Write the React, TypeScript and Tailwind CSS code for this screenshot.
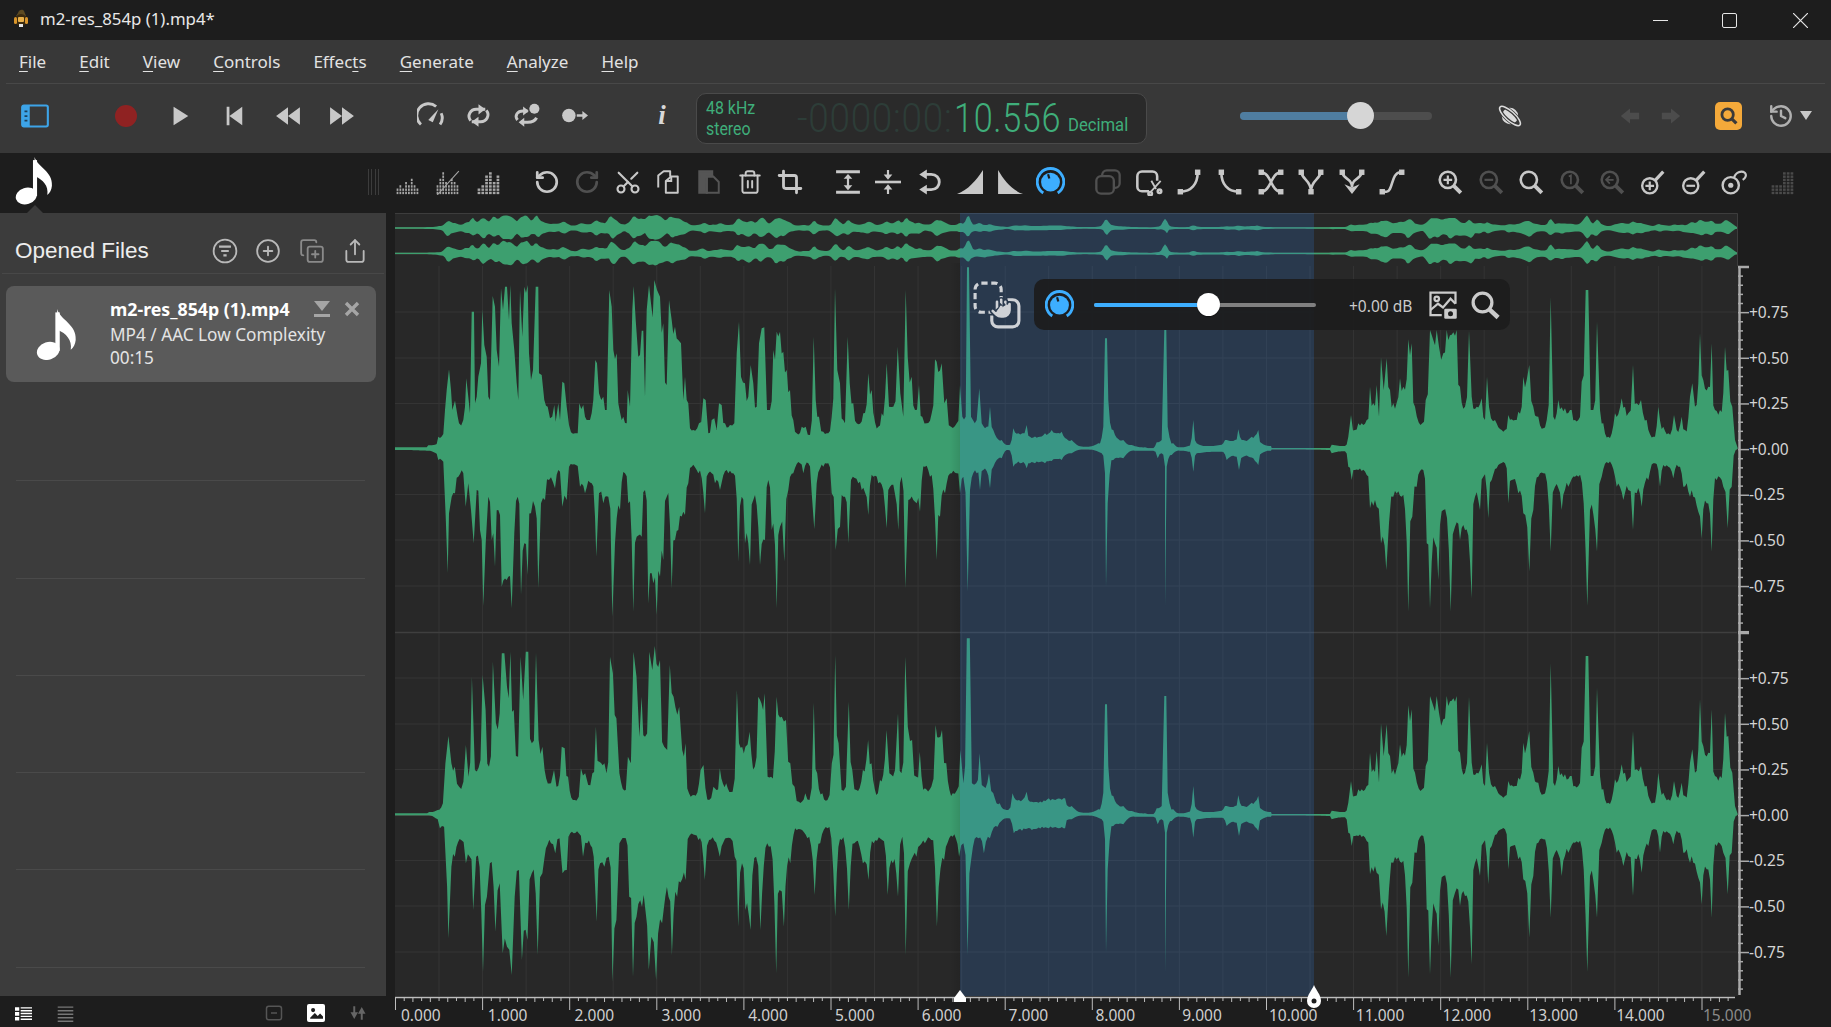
import type { ReactNode } from "react";
import { CirclePlus, CopyPlus, Crop, Hand, History, RotateCcw, RotateCw, Scissors, Share, Trash2 } from "lucide-react";

type Pt = [number, number];

// traced wave envelopes, written in the coordinates they were read at
const parse = (s: string, x0: number, y0: number, kx: number, ky: number): Pt[] =>
  s.split(";").map((p) => {
    const [x, y] = p.split(",").map(Number);
    return [x0 + x / kx, y0 + y / ky];
  });

const A_TOP =
  "0,712;95,712;100,706;120,704;130,680;145,672;150,600;155,540;162,478;168,540;172,600;180,572;188,620;192,640;205,630;210,590;214,505;220,560;225,610;230,305;237,305;240,580;245,560;250,500;258,460;262,298;268,405;275,440;280,560;285,570;293,258;300,290;305,420;312,470;318,235;324,300;330,230;336,230;342,330;346,225;350,340;358,420;365,520;370,570;375,240;382,380;388,230;398,225;402,430;408,510;414,480;422,230;430,230;432,490;440,495;448,570;458,590;465,625;478,585;482,635;490,580;495,630;502,515;508,520;515,590;522,645;540,670;548,670;553,580;565,585;570,620;580,630;595,570;601,450;606,460;612,550;625,560;635,600;643,240;650,290;655,420;665,430;670,580;685,620;695,640;698,540;705,590;712,300;716,228;722,330;730,440;740,362;745,362;750,560;755,300;762,225;768,280;778,210;786,240;795,260;805,340;815,525;822,270;830,330;840,350;850,390;858,400;865,570;870,500;880,580;885,655;895,660;912,640;925,565;932,570;940,670;950,630;958,625;965,660;972,580;980,585;990,640;1005,645;1018,640;1025,430;1032,335;1038,500;1050,520;1060,560;1067,465;1075,520;1085,590;1092,400;1100,355;1108,352;1116,600;1125,600;1135,420;1145,365;1155,365;1165,425;1175,480;1185,540;1195,630;1205,670;1220,650;1232,650;1245,675;1256,380;1262,570;1272,620;1285,665;1300,670;1310,620;1320,235;1327,480;1335,520;1345,630";
const A_BOT =
  "0,720;95,722;120,728;130,750;145,755;152,920;158,1090;162,910;170,860;180,850;190,800;205,790;212,890;220,820;228,900;236,1000;245,840;255,960;265,1188;272,1000;280,860;290,990;300,1070;310,900;320,1130;335,1110;350,1195;358,970;368,860;378,1155;388,1000;398,1095;408,910;420,890;430,1135;438,880;450,870;462,810;480,835;495,785;502,890;515,870;522,770;548,768;555,830;570,850;590,820;600,920;604,1040;612,850;625,880;640,860;652,1220;660,1000;675,900;690,790;700,880;715,1205;725,980;740,980;750,840;760,1180;765,1090;775,1120;785,1215;795,1100;805,1050;815,860;830,1135;840,990;850,960;870,915;880,820;890,770;910,790;930,910;940,790;960,820;975,840;1000,790;1015,790;1030,1055;1040,860;1050,1000;1065,1065;1075,870;1095,1065;1110,990;1120,810;1130,960;1145,1195;1155,950;1168,1055;1180,840;1195,790;1215,760;1225,790;1240,760;1250,850;1258,958;1265,820;1285,770;1300,760;1310,850;1322,1020;1335,950;1345,860";
const B_TOP =
  "0,640;8,380;14,520;25,580;35,640;55,610;70,490;80,540;100,650;110,610;125,460;132,590;145,590;158,410;166,550;175,620;182,240;188,440;200,500;210,600;222,525;232,620;245,640;260,610;270,448;290,460;298,580;305,565;318,650;335,640;345,525;352,620;362,620;366,172;372,172;378,620;395,630;403,535;410,640;425,650;435,590;445,660;470,690;490,705;505,655;520,670;532,670;545,645;555,680;600,670;620,660;650,665;680,690;720,710;760,700;775,650;780,385;786,385;790,570;805,660;835,690;860,705;900,712;920,715;935,697;950,690;958,360;964,360;968,650;985,700;1005,712;1030,708;1045,630;1055,700;1085,708;1125,705;1140,690;1170,690;1180,658;1195,690;1220,680;1240,660;1250,700;1278,708;1280,714;1350,714";
const B_BOT =
  "0,860;10,1000;18,810;40,820;50,840;70,915;85,800;100,820;125,955;135,830;160,960;170,800;181,1135;190,870;215,880;225,905;240,770;255,800;275,1050;285,920;300,850;320,790;335,790;345,850;355,800;368,1145;375,840;395,790;405,840;415,780;435,835;445,770;470,745;490,720;505,770;525,760;545,775;555,760;600,760;650,750;680,730;720,718;770,730;780,790;783,1130;788,880;805,750;835,745;870,722;925,722;938,745;950,730;960,770;960,1190;965,770;980,735;1005,722;1030,725;1045,785;1055,730;1130,725;1145,750;1175,740;1182,780;1195,740;1240,765;1250,730;1278,722;1280,718;1350,718";
const C_TOP =
  "0,714;105,714;110,704;150,708;160,680;168,615;180,660;190,640;215,630;225,530;235,580;245,525;252,620;258,442;266,540;275,445;285,540;295,580;315,505;325,530;340,388;350,400;360,590;382,640;392,570;405,360;425,360;432,410;445,430;455,360;485,360;495,530;510,590;522,362;530,560;545,590;560,565;570,630;576,500;582,590;600,630;630,660;640,615;660,630;670,605;680,590;685,500;695,510;703,465;715,590;730,620;745,655;755,630;767,262;775,620;790,570;810,595;830,600;840,630;850,630;860,515;872,240;880,240;887,600;895,600;906,335;915,600;925,640;940,680;960,610;980,565;990,590;1000,610;1014,465;1025,580;1038,570;1055,630;1075,680;1090,590;1105,650;1120,670;1137,615;1145,660;1160,620;1170,660;1185,560;1192,520;1200,590;1215,370;1225,510;1240,530;1250,400;1260,600;1275,600;1290,410;1300,480;1312,590;1320,690;1328,714";
const C_BOT =
  "0,718;105,720;110,730;150,724;160,770;170,810;180,780;215,795;225,895;245,890;258,1000;274,1080;282,940;295,860;320,860;340,1205;352,920;365,830;385,780;395,1000;405,1195;420,1000;430,1110;445,900;467,1205;480,950;495,990;510,960;530,1165;540,860;555,900;565,800;580,925;590,810;630,760;640,880;650,810;670,850;685,910;703,1085;715,900;730,800;745,790;767,1025;780,830;800,900;820,830;850,800;877,1188;885,900;906,1025;920,800;940,760;965,830;985,870;1000,840;1014,960;1025,850;1040,890;1060,810;1080,760;1095,830;1110,770;1135,805;1150,770;1165,830;1185,860;1220,985;1235,880;1250,1025;1265,810;1285,830;1298,955;1310,830;1322,720;1328,716";
const D_TOP =
  "0,550;75,550;80,546;100,540;112,520;118,400;125,318;132,400;140,410;150,470;160,455;166,345;172,440;180,140;187,420;200,390;205,135;212,240;220,410;229,95;236,280;245,250;250,70;256,70;262,170;270,65;278,240;288,380;294,80;300,210;306,65;312,65;320,340;330,68;336,330;345,350;350,420;365,460;372,420;378,470;390,350;397,355;405,440;420,510;430,500;435,415;445,430;452,465;462,430;470,290;478,395;490,400;495,430;503,80;510,130;518,265;525,430;540,480;545,380;552,400;558,65;565,140;572,320;577,200;585,320;595,65;602,120;608,48;620,90;630,350;637,360;643,105;652,200;665,230;672,360;680,340;688,490;700,495;715,420;722,405;735,510;745,470;752,480;760,415;775,460;790,485;800,180;805,340;820,350;830,305;842,410;850,200;865,190;872,440;880,440;893,200;905,260;915,270;925,400;935,470;945,515;960,490;970,510;980,218;988,430;1000,490;1012,510;1022,400;1030,75;1038,340;1045,480;1055,470;1062,215;1070,420;1080,480;1095,420;1107,330;1115,400;1130,490;1135,450;1150,300;1157,430;1170,420;1177,250;1185,430;1194,80;1200,290;1210,330;1220,440;1228,365;1240,475;1255,470;1265,285;1280,300;1290,400;1305,490;1315,480;1323,360;1330,460;1338,25;1345,25;1350,460;1360,460;1368,370;1378,470;1390,430;1400,490;1415,520;1435,540;1445,490;1460,510;1478,485;1490,515;1530,505;1568,505";
const D_BOT =
  "0,556;75,556;95,565;105,595;115,590;122,770;125,925;132,710;140,680;155,630;166,700;175,680;183,840;190,680;206,1025;215,800;222,700;235,905;245,760;252,970;262,950;273,1035;280,800;290,720;297,990;310,930;320,730;334,975;345,730;365,640;375,670;385,625;392,730;402,720;410,610;430,610;440,680;450,640;465,680;472,875;480,700;490,710;500,680;509,1055;518,870;525,640;540,625;548,800;557,1040;565,860;578,830;594,1020;600,920;611,1050;625,880;640,800;648,975;660,800;680,750;690,615;710,630;725,750;735,630;760,680;785,625;795,680;803,890;812,700;820,840;832,900;845,680;855,900;875,650;892,1030;900,780;910,890;925,700;940,600;965,625;982,795;995,640;1012,595;1030,860;1045,630;1062,840;1075,640;1095,700;1108,750;1120,640;1140,630;1153,795;1165,700;1177,800;1187,620;1195,975;1205,700;1220,680;1240,640;1255,630;1268,890;1285,690;1305,620;1320,680;1330,640;1340,975;1348,690;1365,625;1378,670;1392,625;1410,590;1435,565;1448,610;1490,600;1530,595;1568,595";

const join = (a: string, b: string, c: string) => [
  ...parse(a, 395, 210, 3, 3),
  ...parse(b, 845, 210, 3, 3),
  ...parse(c, 1295, 210, 3, 3),
];

const CY1 = 448.7;
const CY2 = 814.7;

// stable pseudo noise so the picture is the same on every load
const noise = (x: number) => {
  const v = Math.sin(x * 12.9898) * 43758.5453;
  return v - Math.floor(v);
};

// bends the straight traced segments inward and roughens them a little
function detail(pts: Pt[], cy: number): Pt[] {
  const out: Pt[] = [];
  for (let i = 0; i < pts.length - 1; i++) {
    const [x0, y0] = pts[i];
    const [x1, y1] = pts[i + 1];
    out.push([x0, y0]);
    const dir = y0 < cy ? -1 : 1;
    const a0 = Math.abs(y0 - cy);
    const a1 = Math.abs(y1 - cy);
    const steps = Math.floor((x1 - x0) / 1.6);
    for (let s = 1; s < steps; s++) {
      const t = s / steps;
      const x = x0 + (x1 - x0) * t;
      const base = a0 + (a1 - a0) * t;
      const sag = 0.35 * Math.sin(Math.PI * t) * Math.abs(a1 - a0);
      const rough = base > 8 ? 1 - 0.13 * noise(x + cy) : 1;
      out.push([x, cy + dir * Math.max(0.5, (base - sag) * rough)]);
    }
  }
  out.push(pts[pts.length - 1]);
  return out;
}

const top1 = detail(join(A_TOP, B_TOP, C_TOP), CY1);
const bot1 = detail(join(A_BOT, B_BOT, C_BOT), CY1);

const secondHalf = (pts: Pt[]): Pt[] =>
  pts.filter(([x]) => x > 1065).map(([x, y]) => [x, y + (CY2 - CY1)]);

const top2 = [...detail(parse(D_TOP, 395, 630, 2.34, 3), CY2), ...secondHalf(top1)];
const bot2 = [...detail(parse(D_BOT, 395, 630, 2.34, 3), CY2), ...secondHalf(bot1)];

const toPath = (top: Pt[], bot: Pt[]) =>
  "M" +
  [...top, ...[...bot].reverse()].map(([x, y]) => `${x.toFixed(1)} ${y.toFixed(1)}`).join("L") +
  "Z";

function sample(pts: Pt[], x: number) {
  for (let i = 1; i < pts.length; i++) {
    if (pts[i][0] >= x) {
      const [x0, y0] = pts[i - 1];
      const [x1, y1] = pts[i];
      const t = x1 === x0 ? 0 : (x - x0) / (x1 - x0);
      return y0 + (y1 - y0) * t;
    }
  }
  return pts[pts.length - 1][1];
}

// the overview strip is a squashed copy of the big wave
function overview(pts: Pt[], cy: number, lane: number, dir: number): Pt[] {
  const out: Pt[] = [];
  for (let x = 395; x <= 1737; x += 2) {
    const sum = Math.abs(sample(pts, x - 1.5) - cy) + Math.abs(sample(pts, x) - cy) + Math.abs(sample(pts, x + 1.5) - cy);
    const a = sum / 3 / 170;
    out.push([x, lane + dir * (0.5 + 13 * Math.pow(a, 0.8))]);
  }
  return out;
}

const WAVE1 = toPath(top1, bot1);
const WAVE2 = toPath(top2, bot2);
const OV1 = toPath(overview(top1, CY1, 228, -1), overview(bot1, CY1, 228, 1));
const OV2 = toPath(overview(top2, CY2, 253.5, -1), overview(bot2, CY2, 253.5, 1));

function Svg({
  children,
  size = 26,
  className = "",
  box = "0 0 24 24",
  strokeWidth,
}: {
  children: ReactNode;
  size?: number;
  className?: string;
  box?: string;
  strokeWidth?: number;
}) {
  return (
    <svg width={size} height={size} viewBox={box} fill="none" stroke="currentColor" strokeWidth={strokeWidth} className={className}>
      {children}
    </svg>
  );
}

function Note({ size = 40, className = "" }: { size?: number; className?: string }) {
  return (
    <svg width={size} height={size * 1.2} viewBox="0 0 40 48" className={className} fill="currentColor">
      <ellipse cx="12" cy="39" rx="10.5" ry="8" transform="rotate(-18 12 39)" />
      <rect x="18.5" y="4" width="4" height="35" />
      <path d="M20 1C23 11 38 15 37 29C36.600 33 35 36 32.500 38C34 29 28 23 21 20Z" />
    </svg>
  );
}

function Lens({ children, dim }: { children?: ReactNode; dim?: boolean }) {
  return (
    <Svg className={dim ? "text-[#505050]" : "text-[#c8c8c8]"}>
      <circle cx="10" cy="10" r="7.500" strokeWidth="2.400" />
      <path d="M15.500 15.500L22 22" strokeWidth="3.600" />
      {children}
    </Svg>
  );
}

function KeyIcon({ children }: { children?: ReactNode }) {
  return (
    <Svg className="text-[#c8c8c8]">
      <circle cx="9" cy="15.500" r="7" strokeWidth="2.200" />
      <path d="M14 10.500L21.500 2.500" strokeWidth="3" />
      {children}
    </Svg>
  );
}

function Knob({ size = 28 }: { size?: number }) {
  return (
    <Svg size={size} className="text-[#3daeff]">
      <path d="M6 21.500A11 11 0 1 1 18 21.500" strokeWidth="2.400" />
      <circle cx="12" cy="12.500" r="7.800" fill="currentColor" stroke="none" />
      <path d="M10 6L11 9.500" stroke="#1d1d1d" strokeWidth="1.800" />
    </Svg>
  );
}

function Bars({ cols, dim, slash }: { cols: number[]; dim?: boolean; slash?: boolean }) {
  return (
    <Svg className={dim ? "text-[#4a4a4a]" : "text-[#a6a6a6]"}>
      {cols.map((n, c) =>
        Array.from({ length: n }, (_, r) => (
          <rect
            key={`${c}-${r}`}
            x={1.500 + c * (21 / cols.length)}
            y={21 - r * 3}
            width={21 / cols.length - 1}
            height="2.200"
            fill="currentColor"
            stroke="none"
          />
        )),
      )}
      {slash && <path d="M2 24L22 2" strokeWidth="1" />}
    </Svg>
  );
}

const Cap = ({ x, y }: { x: number; y: number }) => (
  <rect x={x - 2.500} y={y - 2.500} width="5" height="5" fill="currentColor" stroke="none" />
);

function Curve({ d, caps }: { d: string; caps: Pt[] }) {
  return (
    <Svg className="text-[#c8c8c8]">
      <path d={d} strokeWidth="2.400" />
      {caps.map(([x, y], i) => (
        <Cap key={i} x={x} y={y} />
      ))}
    </Svg>
  );
}

function Slot({ w = "w-[40.6px]", children }: { w?: string; children?: ReactNode }) {
  return <div className={`flex shrink-0 items-center justify-center ${w}`}>{children}</div>;
}

const MENUS: [string, string, string][] = [
  ["", "F", "ile"],
  ["", "E", "dit"],
  ["", "V", "iew"],
  ["", "C", "ontrols"],
  ["Effec", "t", "s"],
  ["", "G", "enerate"],
  ["", "A", "nalyze"],
  ["", "H", "elp"],
];

function TitleBar() {
  return (
    <div className="flex h-10 shrink-0 items-center bg-[#1d1d1d] pl-[13px]">
      <svg width="16" height="22" viewBox="0 0 16 22" className="mt-[-2px]">
        <path d="M5 5C6 1 10 1 11 3L13 8H3Z" fill="#5d4a22" />
        <circle cx="8" cy="12" r="6" fill="#3a2a10" />
        <rect x="1" y="9" width="3" height="7" rx="1.500" fill="#d9952b" />
        <rect x="12" y="9" width="3" height="7" rx="1.500" fill="#d9952b" />
        <rect x="5" y="9" width="6" height="5" rx="1" fill="#e8b04a" />
        <rect x="6" y="16" width="4" height="3" fill="#e6e6e6" />
      </svg>
      <span className="ml-[11px] mt-[-2px] text-[16.800px] leading-none text-[#e8e8e8]">m2-res_854p (1).mp4*</span>
      <div className="ml-auto flex items-center text-[#e6e6e6]">
        <span className="h-px w-[15px] bg-current" />
        <span className="ml-[54px] h-[15px] w-[15px] rounded-[2px] border-[1.5px] border-current" />
        <svg className="ml-[56px] mr-[23px]" width="15" height="15" viewBox="0 0 15 15" stroke="currentColor" strokeWidth="1.200">
          <path d="M0 0L15 15M15 0L0 15" />
        </svg>
      </div>
    </div>
  );
}

function MenuBar() {
  return (
    <div className="flex h-[44px] shrink-0 bg-[#383838] px-[6px]">
      <div className="flex w-full items-center gap-[33.100px] border-b border-[#484848] pl-[13px] text-[17px] leading-none text-[#e2e2e2]">
        {MENUS.map(([pre, key, rest]) => (
          <span key={pre + key + rest}>
            {pre}
            <span className="underline underline-offset-[3px]">{key}</span>
            {rest}
          </span>
        ))}
      </div>
    </div>
  );
}

function Transport() {
  return (
    <div className="flex h-[69px] shrink-0 items-center bg-[#383838] pb-[6px] text-[#c8c8c8]">
      <Svg size={28} className="ml-[21px] text-[#3da4e8]">
        <rect x="1" y="3" width="22" height="18" rx="1.500" strokeWidth="1.800" />
        <rect x="1" y="3" width="6.500" height="18" fill="currentColor" stroke="none" />
        <path d="M3 8H5.500M3 12H5.500M3 16H5.500" stroke="#1d3f5a" strokeWidth="1.500" />
      </Svg>
      <div className="ml-[50px] flex">
        <Slot w="w-[54px]">
          <span className="h-[22px] w-[22px] rounded-full bg-[#8f2222]" />
        </Slot>
        <Slot w="w-[54px]">
          <Svg size={22} className="text-[#c8c8c8]">
            <path d="M5 2L21 12L5 22Z" fill="currentColor" stroke="none" />
          </Svg>
        </Slot>
        <Slot w="w-[54px]">
          <Svg size={22}>
            <path d="M4 2H7V22H4ZM21 2V22L7 12Z" fill="currentColor" stroke="none" />
          </Svg>
        </Slot>
        <Slot w="w-[54px]">
          <Svg size={26}>
            <path d="M12 4V20L1 12ZM23 4V20L12 12Z" fill="currentColor" stroke="none" />
          </Svg>
        </Slot>
        <Slot w="w-[54px]">
          <Svg size={26}>
            <path d="M1 4V20L12 12ZM12 4V20L23 12Z" fill="currentColor" stroke="none" />
          </Svg>
        </Slot>
      </div>
      <div className="ml-[37px] flex">
        <Slot w="w-[48px]">
          <Svg size={27}>
            <path d="M3.500 20A10 10 0 0 1 17 4" strokeWidth="2.600" />
            <path d="M21.500 10A10 10 0 0 1 20.500 20" strokeWidth="2.600" />
            <path d="M10 16L19 6.500L14 18Z" fill="currentColor" stroke="none" />
          </Svg>
        </Slot>
        <Slot w="w-[48px]">
          <Svg size={27}>
            <path d="M5 16.500C1.500 12 5 6.500 10 6.500H18" strokeWidth="2.600" />
            <path d="M19 7.500C22.500 12 19 17.500 14 17.500H6" strokeWidth="2.600" />
            <path d="M12 2L18 6.500L12 11ZM12 13L6 17.500L12 22Z" fill="currentColor" stroke="none" />
          </Svg>
        </Slot>
        <Slot w="w-[48px]">
          <Svg size={27}>
            <path d="M4 16C1 12 4 8 9 8H13" strokeWidth="2.600" />
            <path d="M21 14C20 16 17 18 13 18H7" strokeWidth="2.600" />
            <path d="M9 4L14 8L9 12ZM10 14L5 18L10 22Z" fill="currentColor" stroke="none" />
            <circle cx="19" cy="6" r="4.500" fill="currentColor" stroke="none" />
          </Svg>
        </Slot>
        <Slot w="w-[48px]">
          <Svg size={27}>
            <circle cx="7" cy="12" r="6" fill="currentColor" stroke="none" />
            <path d="M14 12H20" strokeWidth="2.200" />
            <path d="M19 8L24 12L19 16Z" fill="currentColor" stroke="none" />
          </Svg>
        </Slot>
      </div>
      <div className="ml-[44px] flex w-[40px] justify-center font-['Liberation_Serif',serif] text-[27px] font-bold italic leading-none text-[#d8d8d8]">
        i
      </div>
      <div className="ml-[14px] mt-[6px] flex h-[51px] w-[451px] items-center overflow-hidden rounded-[10px] border border-[#4a4a4a] bg-[#2a2a2a] pl-[9px] font-['Roboto',sans-serif] text-[#3fae7a]">
        <div className="w-[91px] origin-left scale-x-[0.86] whitespace-nowrap text-[18.500px] leading-[21px]">
          48 kHz
          <br />
          stereo
        </div>
        <span className="w-[157px] origin-left scale-x-[0.9] whitespace-nowrap text-[41px] font-light leading-none tracking-[0.8px] text-[#2d3d38]">-0000:00:</span>
        <span className="w-[114px] origin-left scale-x-[0.835] whitespace-nowrap text-[41px] font-light leading-none tracking-[0.8px]">10.556</span>
        <span className="mt-[13px] origin-left scale-x-[0.9] whitespace-nowrap text-[18.500px] leading-none">Decimal</span>
      </div>
      <div className="relative ml-[93px] h-[8px] w-[192px] rounded-full bg-[#4d4d4d]">
        <div className="h-full w-[121px] rounded-l-full bg-[#4f7da0]" />
        <span className="absolute left-[107px] top-[-10px] h-[27px] w-[27px] rounded-full bg-[#d6d6d6]" />
      </div>
      <Slot w="w-[40px] ml-[58px]">
        <Svg size={28} className="text-[#dcdcdc]">
          <g transform="rotate(42 12 12)">
            <circle cx="12" cy="12" r="7" fill="currentColor" stroke="none" />
            <ellipse cx="12" cy="12" rx="11" ry="3.800" stroke="#383838" strokeWidth="3" />
            <ellipse cx="12" cy="12" rx="11.500" ry="4" strokeWidth="1.300" />
          </g>
        </Svg>
      </Slot>
      <div className="ml-[79px] flex text-[#4c4c4c]">
        <Slot w="w-[41px]">
          <Svg size={20}>
            <path d="M1 12L12 3V8H23V16H12V21Z" fill="currentColor" stroke="none" />
          </Svg>
        </Slot>
        <Slot w="w-[41px]">
          <Svg size={20}>
            <path d="M23 12L12 3V8H1V16H12V21Z" fill="currentColor" stroke="none" />
          </Svg>
        </Slot>
      </div>
      <div className="ml-[24px] flex h-[28px] w-[27px] items-center justify-center rounded-[5px] bg-[#f4a93a]">
        <Svg size={21} className="text-[#3a3a3a]">
          <circle cx="11" cy="11" r="6.500" strokeWidth="3.200" />
          <path d="M15.500 15.500L21 21" strokeWidth="3.600" />
        </Svg>
      </div>
      <History className="ml-[26px] text-[#b0b0b0]" size={26} strokeWidth={2.200} />
      <span className="ml-[6px] h-0 w-0 border-x-[6px] border-t-[9px] border-x-transparent border-t-[#c8c8c8]" />
    </div>
  );
}

function Toolbar() {
  return (
    <div className="flex h-[60px] shrink-0 items-center bg-[#1d1d1d] pb-[3px]">
      <div className="relative flex h-full w-[352.500px] shrink-0 items-center pl-[14px] text-white">
        <Note size={41} className="mt-[-2px]" />
        <span className="absolute bottom-[-3px] left-[27px] h-0 w-0 border-x-[8px] border-b-[8px] border-x-transparent border-b-[#3c3c3c]" />
      </div>
      <Slot w="w-[35px]">
        <span className="ml-[6px] h-[26px] w-[11px] border-x border-[#3c3c3c] [background:linear-gradient(90deg,transparent_25%,#3c3c3c_25%,#3c3c3c_34%,transparent_34%,transparent_65%,#3c3c3c_65%,#3c3c3c_74%,transparent_74%)]" />
      </Slot>
      <div className="flex">
        <Slot><Bars cols={[2, 3, 2, 4, 3, 5, 3, 2]} /></Slot>
        <Slot><Bars cols={[3, 5, 7, 4, 3, 5, 4, 3]} slash /></Slot>
        <Slot><Bars cols={[2, 3, 6, 7, 4, 6]} /></Slot>
      </div>
      <div className="ml-[17px] flex text-[#c8c8c8]">
        <Slot><RotateCcw size={26} strokeWidth={2.500} /></Slot>
        <Slot><RotateCw size={26} strokeWidth={2.500} className="text-[#505050]" /></Slot>
        <Slot><Scissors size={28} strokeWidth={1.800} className="-rotate-90" /></Slot>
        <Slot>
          <Svg strokeWidth={1.800}>
            <path d="M3 17V6L8 2H14V7M10 22V11L15 7H21V22Z" strokeLinejoin="round" />
            <path d="M10 11H15V7" />
          </Svg>
        </Slot>
        <Slot>
          <Svg className="text-[#555]" strokeWidth={1.800}>
            <path d="M3 2H15V7H10V22H3Z" fill="currentColor" />
            <path d="M10 7H16L21 12V22H10Z" />
          </Svg>
        </Slot>
        <Slot><Trash2 size={26} strokeWidth={1.800} /></Slot>
        <Slot>
          <Crop size={26} strokeWidth={2.600} />
        </Slot>
      </div>
      <div className="ml-[17px] flex text-[#c8c8c8]">
        <Slot>
          <Svg>
            <path d="M1 2.500H23M1 21.500H23" strokeWidth="2.800" />
            <path d="M12 6V18" strokeWidth="2" />
            <path d="M8 9L12 4.500L16 9ZM8 15L12 19.500L16 15Z" fill="currentColor" stroke="none" />
          </Svg>
        </Slot>
        <Slot>
          <Svg>
            <path d="M0 12H24" strokeWidth="2.400" />
            <path d="M12 1V6M12 18V23" strokeWidth="2" />
            <path d="M8 5L12 10L16 5ZM8 19L12 14L16 19Z" fill="currentColor" stroke="none" />
          </Svg>
        </Slot>
        <Slot>
          <Svg>
            <path d="M9 5H14C24 5 24 19 14 19H8" strokeWidth="2.600" />
            <path d="M10 0.500L3 5L10 9.500ZM10 14.500L3 19L10 23.500Z" fill="currentColor" stroke="none" />
          </Svg>
        </Slot>
        <Slot>
          <Svg>
            <path d="M0 23C10 20 18 10 24 1V23Z" fill="currentColor" stroke="none" />
          </Svg>
        </Slot>
        <Slot>
          <Svg>
            <path d="M1 1C6 10 14 20 24 23H1Z" fill="currentColor" stroke="none" />
          </Svg>
        </Slot>
        <Slot><Knob size={29} /></Slot>
      </div>
      <div className="ml-[17px] flex text-[#c8c8c8]">
        <Slot>
          <Svg size={28} className="text-[#505050]" strokeWidth={2}>
            <rect x="2" y="7" width="15" height="15" rx="4" />
            <path d="M7 7V6A4 4 0 0 1 11 2H18A4 4 0 0 1 22 6V13A4 4 0 0 1 18 17H17" />
          </Svg>
        </Slot>
        <Slot>
          <Svg size={28} strokeWidth={2.200}>
            <path d="M12 20H6A4 4 0 0 1 2 16V7A4 4 0 0 1 6 3H15A4 4 0 0 1 19 7V11" />
            <path d="M14 11L18 18M22 11L13 21" strokeWidth="1.600" />
            <circle cx="13" cy="22" r="1.500" />
            <circle cx="21" cy="20" r="1.500" />
          </Svg>
        </Slot>
        <Slot><Curve d="M4 21C14 21 20 14 20 3" caps={[[4, 21], [20, 3]]} /></Slot>
        <Slot><Curve d="M4 3C4 14 10 21 20 21" caps={[[4, 3], [20, 21]]} /></Slot>
        <Slot>
          <Curve d="M3 3C12 3 12 21 21 21M21 3C12 3 12 21 3 21" caps={[[3, 3], [21, 3], [3, 21], [21, 21]]} />
        </Slot>
        <Slot><Curve d="M3 3C4 10 12 10 12 21M21 3C20 10 12 10 12 21" caps={[[3, 3], [21, 3], [12, 21]]} /></Slot>
        <Slot>
          <Svg className="text-[#c8c8c8]">
            <path d="M3 3C4 10 12 8 12 17M21 3C20 10 12 8 12 17" strokeWidth="2.400" />
            <Cap x={3} y={3} />
            <Cap x={21} y={3} />
            <path d="M5 14L12 23L19 14L12 17Z" fill="currentColor" stroke="none" />
          </Svg>
        </Slot>
        <Slot><Curve d="M4 21H7C13 21 11 3 20 3" caps={[[3, 21], [21, 3]]} /></Slot>
      </div>
      <div className="ml-[17px] flex">
        <Slot>
          <Lens>
            <path d="M10 6V14M6 10H14" strokeWidth="2" />
          </Lens>
        </Slot>
        <Slot>
          <Lens dim>
            <path d="M6 10H14" strokeWidth="2" />
          </Lens>
        </Slot>
        <Slot><Lens /></Slot>
        <Slot>
          <Lens dim>
            <path d="M9 7L11 6V14" strokeWidth="1.600" />
          </Lens>
        </Slot>
        <Slot>
          <Lens dim>
            <path d="M13.500 10H6.500M10 6.500L6.500 10L10 13.500" strokeWidth="1.600" />
          </Lens>
        </Slot>
        <Slot>
          <KeyIcon>
            <path d="M9 11.500V19.500M5 15.500H13" strokeWidth="2" />
          </KeyIcon>
        </Slot>
        <Slot>
          <KeyIcon>
            <path d="M5 15.500H13" strokeWidth="2" />
          </KeyIcon>
        </Slot>
        <Slot>
          <Svg className="text-[#c8c8c8]">
            <circle cx="9" cy="15" r="7.500" strokeWidth="2.200" />
            <circle cx="9" cy="15" r="2.400" fill="currentColor" stroke="none" />
            <path d="M12 8.500C13 3 19 1 22 3.500C24 5.500 22.500 8.500 20 10" strokeWidth="2" />
          </Svg>
        </Slot>
      </div>
      <Slot w="w-[40.6px] ml-[8px]"><Bars cols={[3, 3, 3, 7, 7, 7]} dim /></Slot>
    </div>
  );
}

function Sidebar() {
  return (
    <aside className="flex w-[386px] shrink-0 flex-col bg-[#3c3c3c]">
      <div className="mx-[2px] flex h-[61px] shrink-0 items-center border-b border-[#484848] pl-[13px] pr-[16px] pt-[16px] text-[#b9b9b9]">
        <span className="font-['Liberation_Sans',sans-serif] text-[22.500px] leading-none text-[#ededed]">Opened Files</span>
        <div className="ml-auto flex items-center gap-[17.500px]">
          <Svg size={26} strokeWidth={1.700}>
            <circle cx="12" cy="12" r="10.500" />
            <path d="M6.500 8H17.500M8.500 12H15.500M10.500 16H13.500" strokeWidth="2" />
          </Svg>
          <CirclePlus size={26} strokeWidth={1.700} />
          <CopyPlus size={26} strokeWidth={1.700} className="text-[#8a8a8a]" />
          <Share size={26} strokeWidth={1.700} />
        </div>
      </div>
      <div className="mx-[6px] mt-[12px] flex h-[96px] w-[370px] shrink-0 items-center rounded-[8px] bg-[#5a5a5a]">
        <Note size={44} className="ml-[29px] text-white" />
        <div className="ml-[31px] min-w-0 flex-1 text-[17.200px] leading-[23px] text-[#e4e4e4]">
          <div className="mt-[-2px] flex items-center pb-[2px]">
            <span className="text-[17.750px] font-bold text-white">m2-res_854p (1).mp4</span>
            <span className="ml-[24px] flex h-[16px] w-[16px] flex-col items-center">
              <span className="h-0 w-0 border-x-[8px] border-t-[10px] border-x-transparent border-t-[#a5a5a5]" />
              <span className="mt-[3px] h-[3px] w-[16px] bg-[#a5a5a5]" />
            </span>
            <svg className="ml-[14px]" width="16" height="16" viewBox="0 0 16 16" stroke="#a5a5a5" strokeWidth="3.400">
              <path d="M2 2L14 14M14 2L2 14" />
            </svg>
          </div>
          <div>MP4 / AAC Low Complexity</div>
          <div>00:15</div>
        </div>
      </div>
      <div className="mt-[2px] flex-1 pl-[16px] pr-[21px]">
        {[0, 1, 2, 3, 4, 5].map((i) => (
          <div key={i} className="h-[97.300px] border-b border-[#4a4a4a]" />
        ))}
      </div>
    </aside>
  );
}

const GRID_V = Array.from({ length: 30 }, (_, i) => 439 + i * 43.55);
const GRID_H = [312, 358, 403.5, 449, 494.5, 540, 586];

function WaveCanvas() {
  return (
    <div className="relative w-[1343px] shrink-0 overflow-hidden bg-[#282828]">
      <svg width="1343" height="783" viewBox="395 213 1343 783" className="block">
        <g stroke="#343434" strokeWidth="1">
          {GRID_V.map((x) => (
            <path key={x} d={`M${x} 266V996`} />
          ))}
          {GRID_H.map((y) => (
            <path key={y} d={`M395 ${y}H1737M395 ${y + 366}H1737`} />
          ))}
        </g>
        <path d="M395 632.500H1737" stroke="#3f3f3f" strokeWidth="1.500" />
        <path d="M395 213.500H1737.500V266" stroke="#3d3d3d" strokeWidth="1" fill="none" />
        <path d="M395 228H1737M395 253.500H1737M395 448.700H1737M395 814.700H1737" stroke="#566451" strokeWidth="1.500" />
        <path d={OV1} fill="#3d9f6f" />
        <path d={OV2} fill="#3d9f6f" />
        <path d={WAVE1} fill="#3c9e6f" />
        <path d={WAVE2} fill="#3c9e6f" />
      </svg>
      {/* selected range, 6.2s to 10.2s */}
      <div className="absolute bottom-0 left-[565px] top-0 w-[354px] bg-[#2d79d8]/[0.21]">
        <div className="absolute bottom-0 left-[-10px] top-[50px] w-[10px] bg-gradient-to-r from-transparent to-black/10" />
      </div>
      <div className="absolute left-[578px] top-[68px] text-[#cfd2d6]">
        <svg width="48" height="48" viewBox="0 0 46 46" fill="none" stroke="currentColor">
          <rect x="2" y="2" width="25" height="28" rx="6" strokeWidth="3" strokeDasharray="6 3.500" />
          <path d="M33 18H38A6 6 0 0 1 44 24V38A6 6 0 0 1 38 44H24A6 6 0 0 1 18 38V33" strokeWidth="3" />
          <Hand x="15" y="14" width="24" height="24" fill="currentColor" stroke="#29394d" strokeWidth="1.500" />
        </svg>
      </div>
      <div className="absolute left-[639px] top-[66px] flex h-[51px] w-[476px] items-center rounded-[10px] bg-[#1c1c1c]/90 text-[#cbcbcb]">
        <div className="ml-[11px] flex">
          <Knob size={29} />
        </div>
        <div className="relative ml-[20px] h-[4px] w-[222px] rounded-full bg-[#808080]">
          <div className="h-full w-[114px] rounded-full bg-[#3daeff]" />
          <span className="absolute left-[103px] top-[-10px] h-[23px] w-[23px] rounded-full bg-white shadow-[0_1px_1px_#0006]" />
        </div>
        <span className="ml-[33px] mt-[5px] text-[15.500px] leading-none">+0.00 dB</span>
        <Svg size={30} className="ml-[16px]" strokeWidth={1.800}>
          <path d="M11 20H2V2H22V11" />
          <circle cx="7" cy="7" r="1.800" />
          <path d="M2 16L8 11L12 14L18 7L22 11" />
          <rect x="13" y="15" width="10" height="8" rx="1" fill="currentColor" stroke="none" />
          <circle cx="18" cy="19" r="2" fill="#1c1c1c" stroke="none" />
        </Svg>
        <Svg size={30} className="ml-[12px]">
          <circle cx="10" cy="10" r="7.500" strokeWidth="2.600" />
          <path d="M15.500 15.500L22.500 22" strokeWidth="3.600" />
        </Svg>
      </div>
    </div>
  );
}

const DB_LABELS = ["+0.75", "+0.50", "+0.25", "+0.00", "-0.25", "-0.50", "-0.75"];

function TrackScale() {
  return (
    <div className="flex h-[366px] shrink-0 flex-col pt-[23px]">
      {DB_LABELS.map((l) => (
        <div key={l} className="flex h-[45.600px] items-center pl-[11px] text-[15.500px] leading-none text-[#d4d4d4]">
          {l}
        </div>
      ))}
    </div>
  );
}

function DbRuler() {
  const ticks: ReactNode[] = [];
  [267, 633].forEach((y0) => {
    for (let i = 0; i <= 40; i++) {
      const y = y0 + i * 9.13;
      const major = i % 5 === 0;
      ticks.push(<path key={`${y0}-${i}`} d={`M0 ${y}H${major ? 11 : 5}`} strokeWidth={major && i % 40 === 0 ? 2.500 : 1.500} />);
    }
  });
  return (
    <div className="relative w-[93px] shrink-0 pt-[54px]">
      <svg className="absolute left-0 top-0" width="12" height="783" viewBox="0 213 12 783" stroke="#aaaaaa" fill="none">
        <path d="M1.500 267V995" strokeWidth="2.500" />
        {ticks}
      </svg>
      <TrackScale />
      <TrackScale />
    </div>
  );
}

const TIME_LABELS = Array.from({ length: 16 }, (_, i) => `${i}.000`);

function StatusRow() {
  const marks: ReactNode[] = [];
  for (let i = 0; i <= 153; i++) {
    const x = i * 8.71 + 0.5;
    marks.push(<path key={i} d={`M${x} 2V${i % 10 === 0 ? 14 : i % 2 === 0 ? 6 : 5}`} />);
  }
  return (
    <div className="flex h-[31px] shrink-0 bg-[#1d1d1d]">
      <div className="flex w-[395px] shrink-0 items-center pl-[15px] pt-[3px] text-[#8a8a8a]">
        <Svg size={17} className="text-white">
          <path d="M0 3H6V8H0ZM0 10H6V15H0ZM0 17H6V22H0Z" fill="currentColor" stroke="none" />
          <path d="M8 4H24M8 8H24M8 12H24M8 16H24M8 20H24" strokeWidth="2" />
        </Svg>
        <Svg size={17} className="ml-[25px] text-[#777]">
          <path d="M1 3H23M1 8H23M1 13H23M1 18H23M1 23H23" strokeWidth="2" />
        </Svg>
        <Svg size={18} className="ml-[191px] text-[#555]" strokeWidth={2}>
          <rect x="2" y="3" width="20" height="18" rx="3" />
          <path d="M8 12H16" />
        </Svg>
        <div className="ml-[24px] flex h-[18px] w-[18px] items-center justify-center rounded-[2px] bg-white">
          <Svg size={14} className="text-[#1d1d1d]">
            <circle cx="7" cy="7" r="3.500" fill="currentColor" stroke="none" />
            <path d="M2 20L10 12L15 17L19 13L24 18V22H2Z" fill="currentColor" stroke="none" />
          </Svg>
        </div>
        <Svg size={18} className="ml-[24px] text-[#666]">
          <path d="M2 11L7 20L12 11ZM12 13L17 4L22 13Z" fill="currentColor" stroke="none" />
          <path d="M7 3V13M17 11V21" strokeWidth="2.600" />
        </Svg>
      </div>
      <div className="relative flex-1">
        <svg className="absolute left-0 top-0" width="1345" height="16" viewBox="0 0 1345 16" fill="none" stroke="#bdbdbd" strokeWidth="1">
          <path d="M0 1.500H1340" strokeWidth="1.500" />
          {marks}
        </svg>
        <div className="flex pl-[6px] pt-[10px] text-[15.500px] leading-[19px] text-[#cfcfcf]">
          {TIME_LABELS.map((t, i) => (
            <span key={t} className={`w-[86.800px] shrink-0 ${i === 15 ? "text-[#8a8a8a]" : ""}`}>
              {t}
            </span>
          ))}
        </div>
        <svg className="absolute left-[558px] top-[-6px]" width="14" height="12" viewBox="0 0 14 12" fill="white">
          <path d="M7 0L13 8V12H1V8Z" />
        </svg>
        <svg className="absolute left-[911px] top-[-11px]" width="16" height="24" viewBox="0 0 16 24">
          <path d="M8 0C10 5 15 10 15 16A7 7 0 0 1 1 16C1 10 6 5 8 0Z" fill="white" />
          <circle cx="8" cy="16" r="2.500" fill="#1d1d1d" />
        </svg>
      </div>
    </div>
  );
}

export default function App() {
  return (
    <div className="flex h-[1027px] w-[1831px] flex-col overflow-hidden bg-[#1d1d1d] font-['Noto_Sans',sans-serif]">
      <TitleBar />
      <MenuBar />
      <Transport />
      <Toolbar />
      <div className="flex h-[783px] shrink-0">
        <Sidebar />
        <div className="w-[9px] shrink-0" />
        <WaveCanvas />
        <DbRuler />
      </div>
      <StatusRow />
    </div>
  );
}
